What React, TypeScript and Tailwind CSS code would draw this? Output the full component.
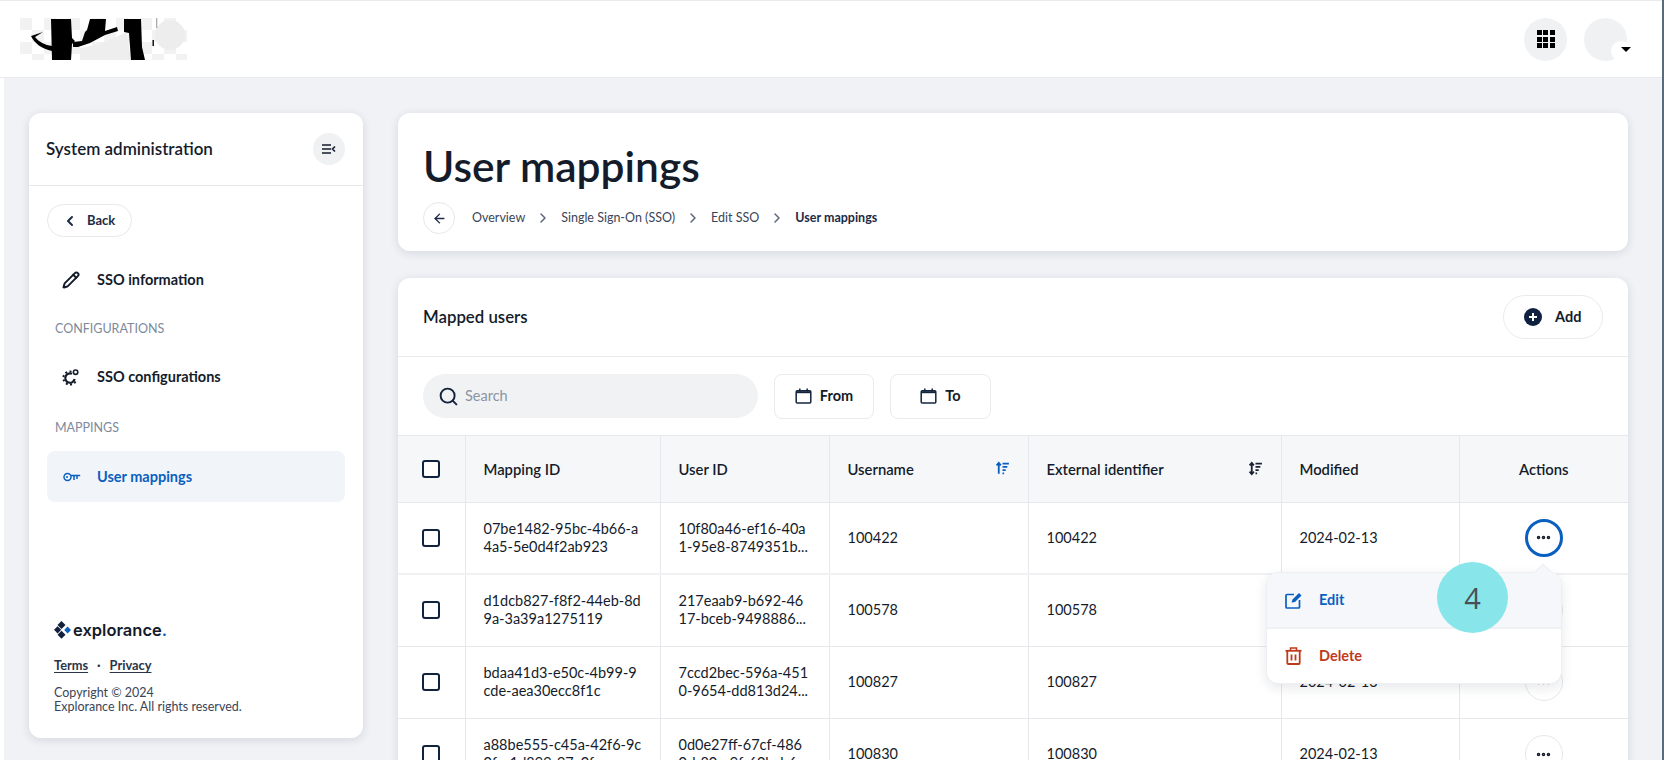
import React from "react";
import { ChevronLeft, ChevronRight, ArrowLeft, Search, Pencil, Ellipsis } from "lucide-react";

const rows = [
  [["07be1482-95bc-4b66-a", "4a5-5e0d4f2ab923"], ["10f80a46-ef16-40a", "1-95e8-8749351b..."], "100422"],
  [["d1dcb827-f8f2-44eb-8d", "9a-3a39a1275119"], ["217eaab9-b692-46", "17-bceb-9498886..."], "100578"],
  [["bdaa41d3-e50c-4b99-9", "cde-aea30ecc8f1c"], ["7ccd2bec-596a-451", "0-9654-dd813d24..."], "100827"],
  [["a88be555-c45a-42f6-9c", "0fe-1d899-97c0f"], ["0d0e27ff-67cf-486", "0-b80a-9f-60bcb6..."], "100830"],
] as const;

function Box() {
  return <span className="block h-[18px] w-[18px] rounded-[3px] border-2 border-[#10243e] bg-white" />;
}

function SortIcon({ blue }: { blue?: boolean }) {
  const c = blue ? "#0a5fc0" : "#1a2233";
  return (
    <svg width="15" height="15" viewBox="0 0 14 14" fill="none" stroke={c} strokeWidth="1.7">
      <path d="M3.5 2v10M1.5 4l2-2.2 2 2.2" />
      {!blue && <path d="M1.5 10l2 2.2 2-2.2" />}
      <path d="M7 2.5h6M7 5.5h4.5M7 8.5h3M7 11.5h1.5" />
    </svg>
  );
}

function CalendarIcon() {
  return (
    <svg width="17" height="16" viewBox="0 0 17 16" fill="none" stroke="#14243f" strokeWidth="1.5" className="shrink-0">
      <rect x="1.2" y="2.8" width="14.6" height="12.2" rx="1" />
      <path d="M1.2 4.2h14.6" strokeWidth="2" />
      <path d="M4.8 0.5v3M12.2 0.5v3" />
    </svg>
  );
}

function Logo() {
  return (
    <svg width="167" height="42" viewBox="0 0 167 42" className="block">
      <defs>
        <pattern id="chk" width="24" height="24" patternUnits="userSpaceOnUse">
          <rect width="24" height="24" fill="#ffffff" />
          <rect width="12" height="12" fill="#f2f2f2" />
          <rect x="12" y="12" width="12" height="12" fill="#f2f2f2" />
        </pattern>
      </defs>
      <rect width="167" height="42" fill="url(#chk)" />
      <circle cx="150" cy="17" r="15" fill="#ededed" />
      <path d="M60 30l20-4 27-12 4 28H60z" fill="#eeeeee" />
      <path d="M31 1h20l1 19 3 3-3 3-1 16H32z" fill="#000" />
      <path d="M70 1h16l-1 12 12-4 1 4-13 4-15 8-12 4h-5v-5l9-1 3-9 2-2z" fill="#000" />
      <path d="M104 1h17l1 28 3 13h-14l-2-27-5-1z" fill="#000" />
      <path d="M32 33C22 31 14 25 11 18l12-4-8 5c4 5 10 8 17 9z" fill="#000" />
      <path d="M132.5 22h1.4v6h-1.4z" fill="#000" />
      <path d="M136.4 0h.8v10h-.8z" fill="#777" />
    </svg>
  );
}

function ExploranceMark() {
  return (
    <svg width="18" height="18" viewBox="0 0 18 18" className="shrink-0">
      <path d="M7.5 0l4 4-4 4-4-4zM3.6 5.2l3.6 3.6-3.6 3.6L0 8.8zM7.5 9.8l4 4-4 4-4-4z" fill="#14213d" />
      <path d="M13.6 5.6L17 9l-3.4 3.4L10.2 9z" fill="#0a5fc0" />
    </svg>
  );
}

function EditIcon() {
  return (
    <svg width="17" height="17" viewBox="0 0 17 17" fill="none" stroke="#0a5fc0" strokeWidth="1.7" className="shrink-0">
      <path d="M9 2.5H2a1 1 0 0 0-1 1V15a1 1 0 0 0 1 1h11.5a1 1 0 0 0 1-1V8" />
      <path d="M6.5 10.5l1-3 6.5-6.5 2.5 2.5L10 10z" fill="#0a5fc0" stroke="none" />
    </svg>
  );
}

function TrashIcon() {
  return (
    <svg width="17" height="18" viewBox="0 0 17 18" fill="none" stroke="#bf3a1d" strokeWidth="1.8" className="shrink-0">
      <path d="M0.5 3.8h16" />
      <path d="M5.5 3.5V1h6v2.5" strokeWidth="1.5" />
      <path d="M2.3 4v12a1 1 0 0 0 1 1h10.4a1 1 0 0 0 1-1V4" />
      <path d="M6.5 7.5v6M10.5 7.5v6" />
    </svg>
  );
}

function GearIcon() {
  return (
    <svg width="18" height="18" viewBox="0 0 18 18" fill="none" stroke="#141c2b" className="shrink-0">
      <path d="M10 5.8A4.7 4.7 0 1 0 12.6 11" strokeWidth="2.2" />
      <path d="M9.5 3.6A6.6 6.6 0 1 0 14.4 11.5" strokeWidth="2" strokeDasharray="2 2.4" />
      <circle cx="13.6" cy="4.2" r="2.2" strokeWidth="1.6" />
    </svg>
  );
}

function Menu() {
  return (
    <div className="absolute left-[1266px] top-[572px] z-10 w-[296px] rounded-xl border border-[#edeff2] bg-white shadow-[0_4px_12px_rgba(20,30,50,0.1)]">
      <div className="absolute -top-[7px] left-[270px] h-3 w-3 rotate-45 border-l border-t border-[#edeff2] bg-[#f5f7fa]" />
      <div className="relative flex h-[56px] items-center gap-[17px] rounded-t-xl border-b-2 border-[#f0f1f3] bg-[#f5f7fa] pl-[18px] text-[14.5px] font-bold text-[#0a5fc0]">
        <EditIcon />
        <span>Edit</span>
      </div>
      <div className="flex h-[54px] items-center gap-[17px] pl-[18px] text-[14.5px] font-bold text-[#bf3a1d]">
        <TrashIcon />
        <span>Delete</span>
      </div>
    </div>
  );
}

export default function App() {
  return (
    <div className="relative h-[760px] w-[1664px] overflow-hidden bg-white font-['Lato','Liberation_Sans',sans-serif] text-[#141c2b]">
      <header className="flex h-[78px] items-center justify-between border-y border-[#e8eaee] bg-white pl-5 pr-[37px]">
        <Logo />
        <div className="flex items-center gap-[17px]">
          <button className="grid h-[43px] w-[43px] place-items-center rounded-full bg-[#f0f1f2]">
            <span className="grid grid-cols-3 gap-[1.5px]">
              {Array.from({ length: 9 }).map((_, i) => (
                <span key={i} className="h-[5px] w-[5px] bg-black" />
              ))}
            </span>
          </button>
          <span className="relative block h-[43px] w-[43px] rounded-full bg-[#f0f1f2]">
            <span className="absolute bottom-0 right-[-4px] h-[20px] w-[20px] rounded-full bg-white" />
            <span className="absolute bottom-[9px] right-[-4px] h-0 w-0 border-x-[5px] border-t-[5px] border-x-transparent border-t-black" />
          </span>
        </div>
      </header>

      <div className="ml-1 flex h-[682px] gap-[35px] bg-[#f0f2f6] pl-[25px] pr-9 pt-[35px]">
        <aside className="flex h-[625px] w-[334px] shrink-0 flex-col rounded-xl bg-white shadow-[0_2px_10px_rgba(20,30,50,0.13)]">
          <div className="flex h-[73px] shrink-0 items-center justify-between border-b border-[#e6e8eb] pl-[17px] pr-[18px]">
            <span className="text-[17px] font-semibold text-[#141c2b]">System administration</span>
            <button className="grid h-8 w-8 place-items-center rounded-full bg-[#f0f1f2]">
              <svg width="14" height="10" viewBox="0 0 14 10" fill="none" stroke="#141c2b" strokeWidth="1.6">
                <path d="M0 1h9M0 5h9M0 9h9M13 2.5L10.5 5 13 7.5" />
              </svg>
            </button>
          </div>
          <div className="px-[18px] pt-[18px]">
            <button className="flex h-[33px] w-[85px] items-center gap-[9px] rounded-full border border-[#e6e8eb] pl-[14px] text-[13px] font-bold text-[#1d2b45]">
              <ChevronLeft size={16} strokeWidth={3} />
              Back
            </button>
          </div>
          <div className="mt-[18px] flex h-[50px] items-center pl-[33px] text-[14.5px] font-bold">
            <Pencil size={18} strokeWidth={2.6} className="shrink-0" />
            <span className="ml-[17px]">SSO information</span>
          </div>
          <div className="pl-[26px] pt-[14px] text-[12.5px] leading-[20px] text-[#7d8a9c]">CONFIGURATIONS</div>
          <div className="mt-[13px] flex h-[50px] items-center pl-[33px] text-[14.5px] font-bold">
            <GearIcon />
            <span className="ml-[17px]">SSO configurations</span>
          </div>
          <div className="pl-[26px] pt-[16px] text-[12.5px] leading-[20px] text-[#7d8a9c]">MAPPINGS</div>
          <div className="mx-[18px] mt-[13px] flex h-[51px] items-center rounded-lg bg-[#f1f4f9] pl-[16px] text-[14.5px] font-bold text-[#0a5fc0]">
            <svg width="18" height="12" viewBox="0 0 18 12" fill="none" stroke="#0a5fc0" strokeWidth="1.5" className="shrink-0">
              <circle cx="4.5" cy="6" r="3.5" />
              <circle cx="4" cy="6" r="1" fill="#0a5fc0" stroke="none" />
              <path d="M8 4.5h9.2M14 4.5V8M11 4.5V9" />
            </svg>
            <span className="ml-[16px]">User mappings</span>
          </div>
          <div className="mt-auto px-[25px] pb-[24px]">
            <div className="flex items-center gap-[1px] font-['Inter',sans-serif] text-[16.5px] font-semibold leading-[22px] text-[#141c2b]">
              <ExploranceMark />
              <span>explorance<span className="text-[#0a5fc0]">.</span></span>
            </div>
            <div className="mt-[16px] flex items-center gap-[9px] text-[12.8px] font-bold leading-[16px] text-[#2a3548]">
              <span className="underline underline-offset-2">Terms</span>
              <span>·</span>
              <span className="underline underline-offset-2">Privacy</span>
            </div>
            <div className="mt-[13px] text-[12.5px] leading-[14px] text-[#3a4558]">
              <div>Copyright © 2024</div>
              <div>Explorance Inc. All rights reserved.</div>
            </div>
          </div>
        </aside>

        <main className="flex min-w-0 flex-1 flex-col gap-[27px]">
          <section className="h-[138px] shrink-0 rounded-xl bg-white px-[25px] pt-[23px] shadow-[0_2px_10px_rgba(20,30,50,0.12)]">
            <h1 className="text-[42.5px] font-semibold leading-[60px] text-[#141c2b]">User mappings</h1>
            <div className="mt-[6px] flex items-center text-[12.5px] text-[#3a4558]">
              <button className="grid h-8 w-8 place-items-center rounded-full border border-[#e6e8eb] text-[#1d2b45]">
                <ArrowLeft size={15} strokeWidth={2.2} />
              </button>
              <span className="ml-[17px]">Overview</span>
              <ChevronRight size={16} strokeWidth={2.2} className="mx-[10px] text-[#5b6678]" />
              <span>Single Sign-On (SSO)</span>
              <ChevronRight size={16} strokeWidth={2.2} className="mx-[10px] text-[#5b6678]" />
              <span>Edit SSO</span>
              <ChevronRight size={16} strokeWidth={2.2} className="mx-[10px] text-[#5b6678]" />
              <span className="font-bold text-[#1d2b45]">User mappings</span>
            </div>
          </section>

          <section className="rounded-t-xl bg-white shadow-[0_2px_10px_rgba(20,30,50,0.12)]">
            <div className="flex h-[79px] items-center justify-between border-b border-[#e9ebee] pl-[25px] pr-[25px]">
              <span className="text-[16.8px] font-semibold">Mapped users</span>
              <button className="flex h-[44px] w-[100px] items-center gap-[13px] rounded-full border border-[#e9ebee] pl-[20px] text-[14.5px] font-bold">
                <svg width="18" height="18" viewBox="0 0 18 18" className="shrink-0">
                  <circle cx="9" cy="9" r="9" fill="#0f2040" />
                  <path d="M9 5v8M5 9h8" stroke="#fff" strokeWidth="2" />
                </svg>
                Add
              </button>
            </div>
            <div className="flex h-[79px] items-center gap-[16px] border-b border-[#e6e8eb] pl-[25px]">
              <div className="flex h-[44px] w-[335px] items-center gap-[6px] rounded-full bg-[#f1f2f4] pl-[15px] text-[14.5px] text-[#8a94a3]">
                <Search size={21} strokeWidth={2.2} className="text-[#14243f]" />
                Search
              </div>
              <button className="flex h-[45px] w-[100px] items-center justify-center gap-[8px] rounded-lg border border-[#e9ebee] text-[14.5px] font-bold">
                <CalendarIcon />
                From
              </button>
              <button className="flex h-[45px] w-[101px] items-center justify-center gap-[8px] rounded-lg border border-[#e9ebee] text-[14.5px] font-bold">
                <CalendarIcon />
                To
              </button>
            </div>
            <table className="w-full table-fixed border-collapse text-[14.5px] leading-[18px]">
              <colgroup>
                <col className="w-[67px]" />
                <col className="w-[195px]" />
                <col className="w-[169px]" />
                <col className="w-[199px]" />
                <col className="w-[253px]" />
                <col className="w-[178px]" />
                <col className="w-[169px]" />
              </colgroup>
              <thead>
                <tr className="h-[66px] bg-[#f6f7f9] text-left text-[14.8px]">
                  <th className="pl-[24px]"><Box /></th>
                  <th className="border-l border-[#e6e8eb] pl-[18px] font-semibold">Mapping ID</th>
                  <th className="border-l border-[#e6e8eb] pl-[18px] font-semibold">User ID</th>
                  <th className="border-l border-[#e6e8eb] pl-[18px] font-semibold">
                    <div className="flex items-center justify-between pr-[18px]">Username <SortIcon blue /></div>
                  </th>
                  <th className="border-l border-[#e6e8eb] pl-[18px] font-semibold">
                    <div className="flex items-center justify-between pr-[18px]">External identifier <SortIcon /></div>
                  </th>
                  <th className="border-l border-[#e6e8eb] pl-[18px] font-semibold">Modified</th>
                  <th className="border-l border-[#e6e8eb] text-center font-semibold">Actions</th>
                </tr>
              </thead>
              <tbody>
                {rows.map((r, i) => (
                  <tr key={r[2]} className={`h-[72px] border-t ${i === 1 ? "border-t-2 border-[#f0f1f3]" : "border-[#e6e8eb]"}`}>
                    <td className="pl-[24px]"><Box /></td>
                    <td className="whitespace-nowrap border-l border-[#e6e8eb] pl-[18px]">
                      <div>{r[0][0]}</div>
                      <div>{r[0][1]}</div>
                    </td>
                    <td className="whitespace-nowrap border-l border-[#e6e8eb] pl-[18px]">
                      <div>{r[1][0]}</div>
                      <div>{r[1][1]}</div>
                    </td>
                    <td className="border-l border-[#e6e8eb] pl-[18px]">{r[2]}</td>
                    <td className="border-l border-[#e6e8eb] pl-[18px]">{r[2]}</td>
                    <td className="border-l border-[#e6e8eb] pl-[18px]">2024-02-13</td>
                    <td className="border-l border-[#e6e8eb]">
                      <span className={`mx-auto grid h-[38px] w-[38px] place-items-center rounded-full bg-white ${i === 0 ? "border-[3px] border-[#0a5fc0]" : "border border-[#e6e8eb]"}`}>
                        <Ellipsis size={17} strokeWidth={3} className="text-[#141c2b]" />
                      </span>
                    </td>
                  </tr>
                ))}
              </tbody>
            </table>
          </section>
        </main>
      </div>

      <Menu />
      <div className="absolute left-[1437px] top-[562px] z-20 grid h-[71px] w-[71px] place-items-center rounded-full bg-[#88e6ea] font-['Open_Sans',sans-serif] text-[29px] text-[#4a4f57]">4</div>
      <div className="absolute right-0 top-0 z-30 h-full w-[2px] bg-[#5c6b7a]" />
    </div>
  );
}
